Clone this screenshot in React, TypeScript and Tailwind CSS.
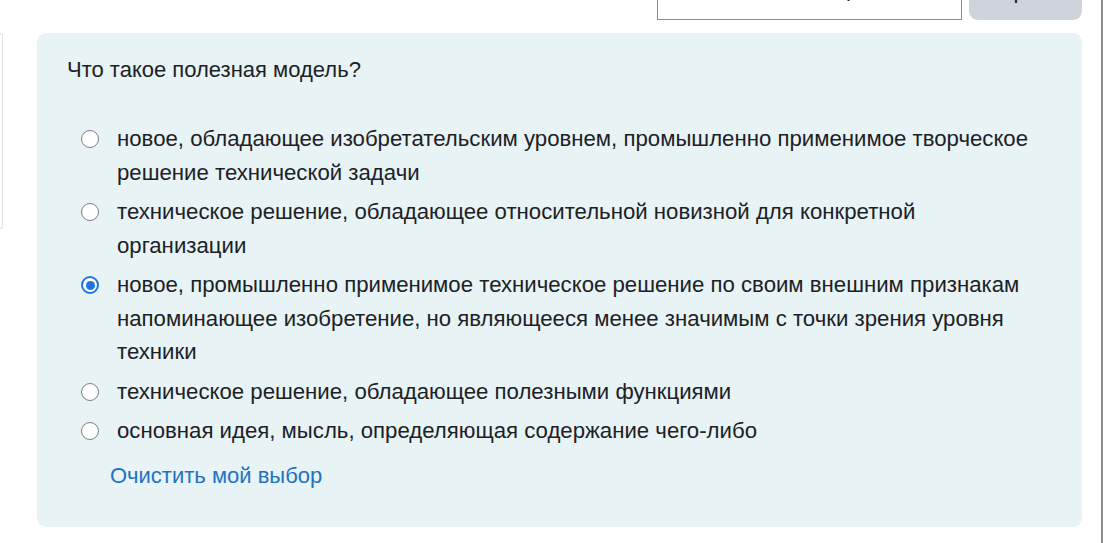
import React from 'react';

const options = [
  'новое, обладающее изобретательским уровнем, промышленно применимое творческое решение технической задачи',
  'техническое решение, обладающее относительной новизной для конкретной организации',
  'новое, промышленно применимое техническое решение по своим внешним признакам напоминающее изобретение, но являющееся менее значимым с точки зрения уровня техники',
  'техническое решение, обладающее полезными функциями',
  'основная идея, мысль, определяющая содержание чего-либо',
];

const Radio = ({ checked }: { checked: boolean }) =>
  checked ? (
    <span className="mt-[8px] flex h-[18px] w-[18px] shrink-0 items-center justify-center rounded-full border-[2px] border-[#1f73e8] bg-white">
      <span className="h-[9px] w-[9px] rounded-full bg-[#1f73e8]" />
    </span>
  ) : (
    <span className="mt-[8px] h-[18px] w-[18px] shrink-0 rounded-full border-[1.5px] border-[#7b7f83] bg-white" />
  );

export default function App() {
  const selected = 2;
  return (
    <div
      className="flex h-[543px] w-[1103px] overflow-hidden bg-white text-[#1d2125]"
      style={{ fontFamily: '"Liberation Sans", Arial, sans-serif' }}
    >
      <div className="flex flex-1 flex-col">
        {/* top controls, cut off by the viewport */}
        <div className="flex h-[20px] items-end justify-end overflow-hidden pr-[19px]">
          <div className="flex h-[40px] w-[305px] items-start justify-center border border-[#c8776b] bg-white text-[22px] leading-none">
            <span className="-mt-[3px] pl-[30px]">Номер</span>
          </div>
          <div className="ml-[7px] flex h-[40px] w-[113px] items-start justify-center rounded-b-[9px] bg-[#ced4da] text-[22px] leading-none">
            <span className="mt-[0px]">Скрыть</span>
          </div>
        </div>

        <div className="mt-[13px] flex">
          {/* left block edge */}
          <div className="h-[196px] w-[3px] rounded-r-[4px] border border-l-0 border-[#dee2e6]" />

          {/* question panel */}
          <div className="ml-[34px] w-[1045px] rounded-[9px] bg-[#e7f3f5] pb-[34px] pl-[30px] pr-[47px] pt-[20px]">
            <div className="text-[22px] leading-[34px]">Что такое полезная модель?</div>

            <div className="mt-[35px] flex flex-col gap-[6px] pl-[14px]">
              {options.map((o, i) => (
                <div key={i} className="flex items-start gap-[18px]">
                  <Radio checked={i === selected} />
                  <span className="text-[22.2px] leading-[33.5px]">{o}</span>
                </div>
              ))}
            </div>

            <div className="mt-[11px] pl-[43px] text-[22px] leading-[34px] text-[#1f72c2]">
              Очистить мой выбор
            </div>
          </div>
        </div>
      </div>
      <div className="w-[2px] bg-[#8c8c8c]" />
    </div>
  );
}
